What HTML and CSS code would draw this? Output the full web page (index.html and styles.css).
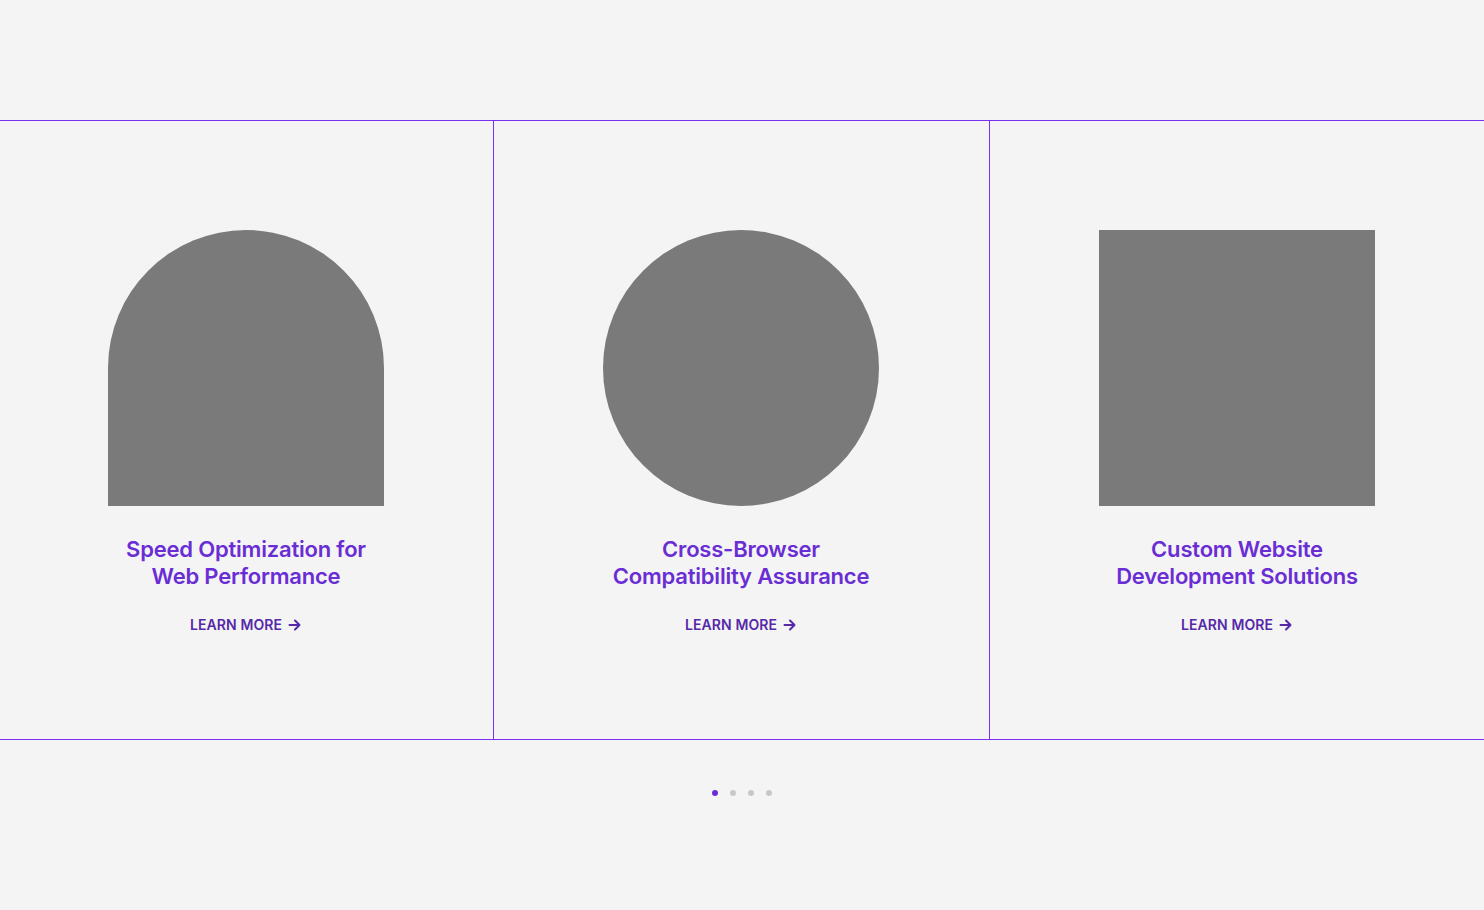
FILE: index.html
```html
<!DOCTYPE html>
<html lang="en">
<head>
<meta charset="utf-8">
<title>Services</title>
<link rel="stylesheet" href="styles.css">
</head>
<body>
<section class="slider">
  <div class="cards">
    <article class="card">
      <div class="shape shape-arch"></div>
      <h3 class="card-title">Speed Optimization for<br>Web Performance</h3>
      <a class="learn" href="#">LEARN MORE
        <svg class="arrow" viewBox="0 0 14 14" width="14" height="14"><path d="M1.5 7h10M7 2.5 11.5 7 7 11.5" fill="none" stroke="currentColor" stroke-width="2" stroke-linecap="round" stroke-linejoin="round"/></svg>
      </a>
    </article>
    <article class="card">
      <div class="shape shape-circle"></div>
      <h3 class="card-title">Cross-Browser<br>Compatibility Assurance</h3>
      <a class="learn" href="#">LEARN MORE
        <svg class="arrow" viewBox="0 0 14 14" width="14" height="14"><path d="M1.5 7h10M7 2.5 11.5 7 7 11.5" fill="none" stroke="currentColor" stroke-width="2" stroke-linecap="round" stroke-linejoin="round"/></svg>
      </a>
    </article>
    <article class="card">
      <div class="shape"></div>
      <h3 class="card-title">Custom Website<br>Development Solutions</h3>
      <a class="learn" href="#">LEARN MORE
        <svg class="arrow" viewBox="0 0 14 14" width="14" height="14"><path d="M1.5 7h10M7 2.5 11.5 7 7 11.5" fill="none" stroke="currentColor" stroke-width="2" stroke-linecap="round" stroke-linejoin="round"/></svg>
      </a>
    </article>
  </div>
  <div class="dots">
    <span class="dot active"></span>
    <span class="dot"></span>
    <span class="dot"></span>
    <span class="dot"></span>
  </div>
</section>
</body>
</html>
```
FILE: styles.css
```css
* { box-sizing: border-box; }
html, body { margin: 0; padding: 0; }
body {
  background: #f4f4f4;
  font-family: Inter, "Noto Sans", sans-serif;
  height: 910px;
  overflow: hidden;
}
.slider {
  padding-top: 120px;
}
.cards {
  display: grid;
  grid-template-columns: 494px 496px 1fr;
  border-top: 1px solid #7b2ff0;
  border-bottom: 1px solid #7b2ff0;
}
.card {
  height: 618px;
  border-right: 1px solid #7b2ff0;
  display: flex;
  flex-direction: column;
  align-items: center;
  padding-top: 109px;
  padding-right: 1px;
}
.card:last-child { border-right: none; padding-right: 0; }
.shape {
  width: 276px;
  height: 276px;
  background: #7a7a7b;
  flex: none;
}
.shape-arch { border-radius: 138px 138px 0 0; }
.shape-circle { border-radius: 50%; }
.card-title {
  margin: 30px 0 0;
  font-size: 22px;
  line-height: 27px;
  font-weight: 600;
  letter-spacing: -0.2px;
  color: #6a2dd4;
  text-align: center;
}
.learn {
  margin-top: 26px;
  display: flex;
  align-items: center;
  gap: 6px;
  font-size: 14px;
  line-height: 18px;
  font-weight: 600;
  letter-spacing: 0.1px;
  color: #5529a8;
  text-decoration: none;
}
.arrow { display: block; }
.dots {
  display: flex;
  justify-content: center;
  gap: 12px;
  padding-top: 50px;
}
.dot {
  width: 6px;
  height: 6px;
  border-radius: 50%;
  background: #c8c8c8;
}
.dot.active { background: #6b2cd8; }
```
